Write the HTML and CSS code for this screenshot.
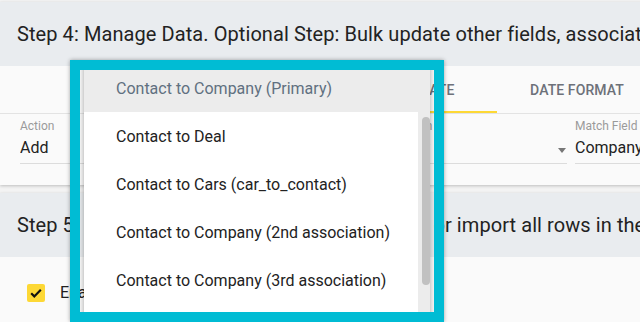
FILE: index.html
```html
<!DOCTYPE html>
<html>
<head>
<meta charset="utf-8">
<link rel="stylesheet" href="styles.css">
</head>
<body>
<div class="page">
  <section class="card">
    <div class="card-head">Step 4: Manage Data. Optional Step: Bulk update other fields, associations and more</div>
    <div class="card-body">
      <div class="tabs">
        <div class="tab">SET</div>
        <div class="tab">OPTIONS</div>
        <div class="tab active">ASSOCIATE</div>
        <div class="tab">DATE FORMAT</div>
      </div>
      <div class="fields">
        <div class="field f-action">
          <div class="label">Action</div>
          <div class="value">Add</div>
        </div>
        <div class="field f-type">
          <div class="label">Association</div>
          <div class="value">Contact to Company</div>
        </div>
        <div class="field f-mode">
          <div class="label">Action</div>
          <div class="value">New<span class="arrow"></span></div>
        </div>
        <div class="field f-match">
          <div class="label">Match Field</div>
          <div class="value">Company Name</div>
        </div>
      </div>
    </div>
  </section>
  <section class="card">
    <div class="card-head">Step 5: Run a quick test using a few rows first, or import all rows in the file</div>
    <div class="card-body body5">
      <label class="check"><span class="box"><svg viewBox="0 0 18 18" width="18" height="18"><path d="M4.2 9.3l3.1 3.1 6.5-6.6" fill="none" stroke="#111" stroke-width="2.2"/></svg></span>Enable test mode</label>
    </div>
  </section>
</div>

<div class="frame">
  <div class="menu">
    <div class="item selected">Contact to Company (Primary)</div>
    <div class="item">Contact to Deal</div>
    <div class="item">Contact to Cars (car_to_contact)</div>
    <div class="item">Contact to Company (2nd association)</div>
    <div class="item">Contact to Company (3rd association)</div>
    <div class="item">Contact to Company (4th association)</div>
    <div class="scroll"><div class="thumb"></div></div>
  </div>
</div>
</body>
</html>
```

FILE: styles.css
```css
* { box-sizing: border-box; }
html, body { margin: 0; padding: 0; }
body {
  background: #f3f3f3;
  font-family: Roboto, "Noto Sans", sans-serif;
  color: #212121;
  width: 640px;
  height: 322px;
  overflow: hidden;
  position: relative;
}
.page { padding-top: 2px; width: 700px; }
.card {
  background: #fafafa;
  box-shadow: 0 1px 3px rgba(0,0,0,0.22);
  margin-bottom: 8px;
}
.card-head {
  height: 64px;
  background: #e9ecef;
  display: flex;
  align-items: center;
  padding-left: 17px;
  font-size: 20px;
  letter-spacing: 0.08px;
  color: #222;
  white-space: nowrap;
  overflow: hidden;
}
.card-body { height: 119px; }
.tabs {
  display: flex;
  height: 48px;
  border-bottom: 1px solid #e3e3e3;
  padding-left: 17px;
}
.tab {
  width: 160px;
  display: flex;
  align-items: center;
  justify-content: center;
  font-size: 14px;
  font-weight: 500;
  color: #6d7179;
  letter-spacing: 0.1px;
}
.tab.active { box-shadow: inset 0 -2px 0 #fdd835; }
.fields {
  display: flex;
  gap: 8px;
  padding: 4px 0 0 20px;
}
.field { display: flex; flex-direction: column; }
.label { font-size: 12px; color: #9a9a9a; height: 16px; line-height: 16px; white-space: nowrap; }
.value {
  font-size: 16px;
  color: #222;
  height: 30px;
  padding-top: 2px;
  line-height: 24px;
  border-bottom: 1px solid #dcdcdc;
  position: relative;
  white-space: nowrap;
  overflow: hidden;
}
.f-action { width: 180px; }
.f-type { width: 182px; }
.f-mode { width: 169px; }
.f-match { width: 120px; }
.arrow {
  position: absolute;
  right: 1px;
  top: 14px;
  border-left: 4.5px solid transparent;
  border-right: 4.5px solid transparent;
  border-top: 5px solid #777;
}
.body5 { height: 80px; padding: 26px 0 0 27px; }
.check { display: flex; align-items: center; font-size: 16px; gap: 15px; }
.box {
  width: 18px; height: 18px;
  background: #fdd835;
  border-radius: 2px;
  display: block;
}
.box svg { display: block; }

.frame {
  position: absolute;
  left: 70px;
  top: 60px;
  width: 374px;
  height: 262px;
  border: 10px solid #00bcd4;
  overflow: hidden;
  box-shadow: 0 0 4px rgba(0,0,0,0.35);
}
.menu {
  position: absolute;
  left: 4px;
  top: -14px;
  width: 346px;
  background: #fff;
  padding-top: 8px;
  box-shadow: 0 2px 6px rgba(0,0,0,0.35);
}
.item {
  height: 48px;
  display: flex;
  align-items: center;
  padding-left: 32px;
  font-size: 16px;
  color: #222;
  white-space: nowrap;
}
.item.selected { background: #ececec; color: #607080; }
.scroll {
  position: absolute;
  right: 0;
  top: 0;
  bottom: 0;
  width: 12px;
  background: #ececec;
}
.thumb {
  position: absolute;
  left: 4px;
  width: 8px;
  top: 61px;
  height: 168px;
  border-radius: 4px;
  background: #c1c1c1;
}
```
